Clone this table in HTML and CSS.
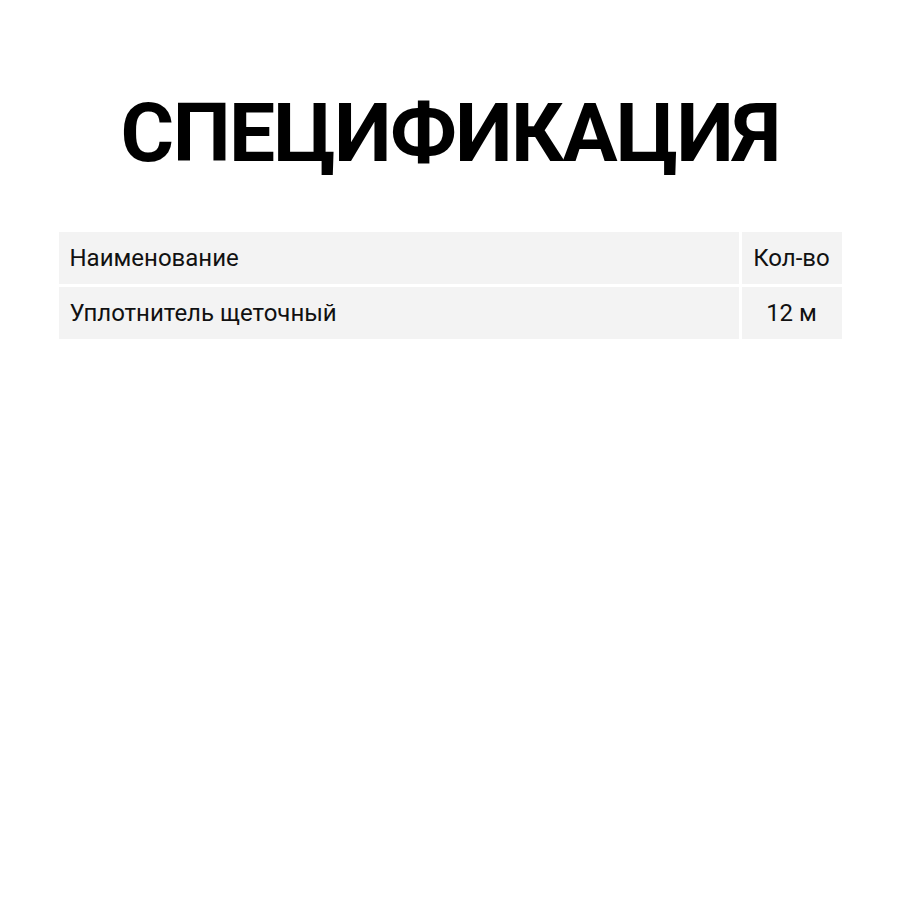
FILE: index.html
```html
<!DOCTYPE html>
<html lang="ru">
<head>
<meta charset="utf-8">
<title>Спецификация</title>
<link rel="stylesheet" href="styles.css">
</head>
<body>
<main class="page">
  <h1 class="title">СПЕЦИФИКАЦИЯ</h1>
  <table class="spec">
    <tr>
      <td class="name">Наименование</td>
      <td class="qty">Кол-во</td>
    </tr>
    <tr>
      <td class="name">Уплотнитель щеточный</td>
      <td class="qty">12 м</td>
    </tr>
  </table>
</main>
</body>
</html>
```

FILE: styles.css
```css
html, body {
  margin: 0;
  padding: 0;
  background: #ffffff;
}
body {
  font-family: Roboto, "Noto Sans", "DejaVu Sans", sans-serif;
  color: #000;
}
.page {
  width: 900px;
  display: flex;
  flex-direction: column;
  align-items: center;
}
.title {
  margin: 85px 0 48px;
  font-size: 82px;
  font-weight: 700;
  line-height: normal;
  letter-spacing: -1.6px;
}
.spec {
  border-collapse: separate;
  border-spacing: 3px;
  width: 789px;
  font-size: 24px;
  color: #111;
}
.spec td {
  background: #f3f3f3;
  padding: 12px 11px;
  line-height: 28px;
}
.spec .name {
  text-align: left;
}
.spec .qty {
  width: 78px;
  text-align: center;
}
```
